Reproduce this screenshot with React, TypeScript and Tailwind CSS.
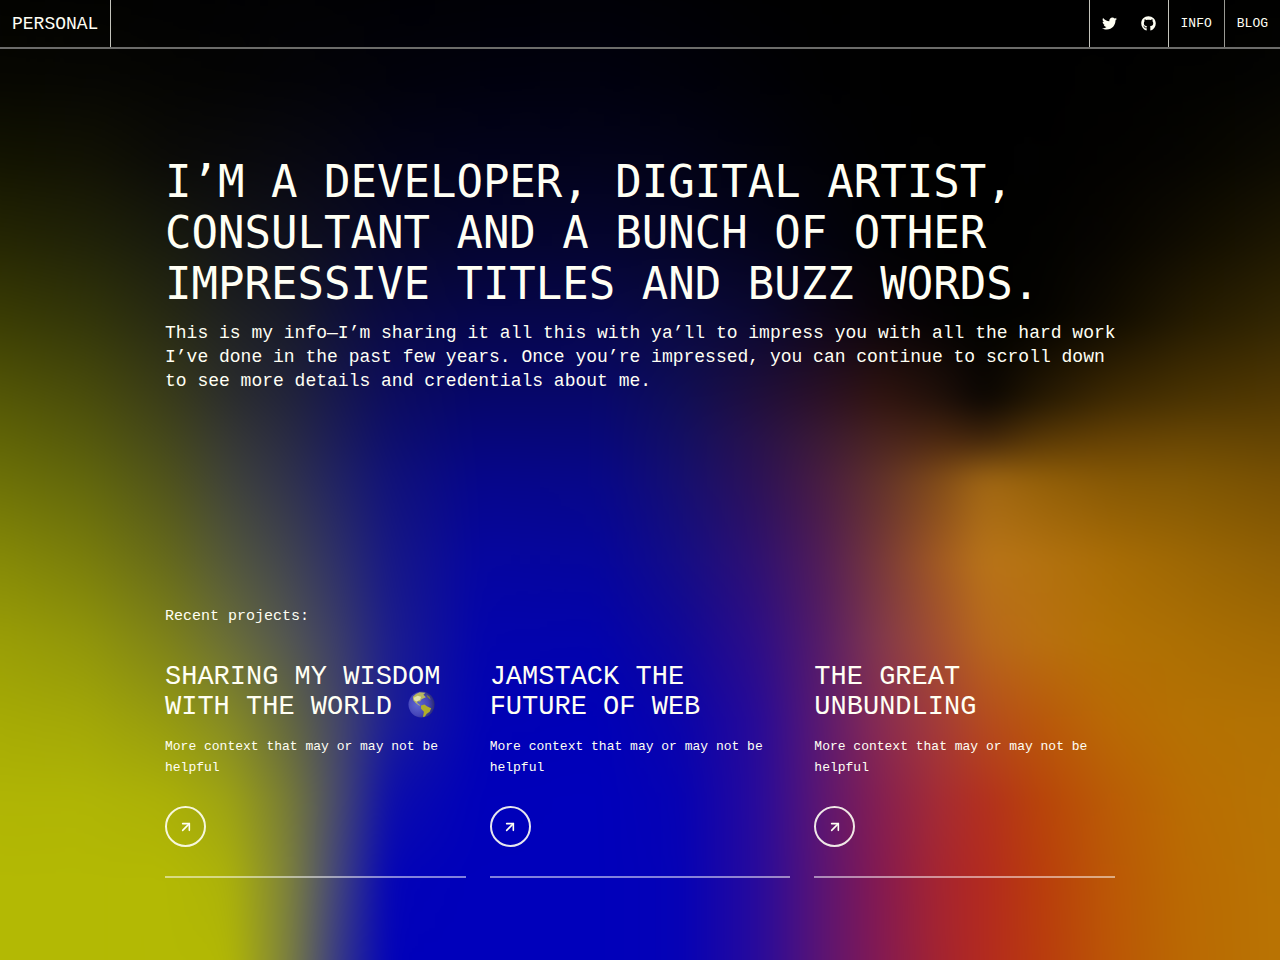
import { FaGithub, FaTwitter } from "react-icons/fa";
import { FiArrowUpRight } from "react-icons/fi";

const ROWS = [0, 80, 160, 240, 320, 400, 440, 480, 560, 640, 720, 800, 880, 960];

const COLUMNS: { x: number; colors: string[] }[] = [
  { x: 0, colors: ["#030301", "#070701", "#131401", "#252603", "#3b3d04", "#555806", "#616506", "#6d7107", "#868a07", "#9a9e06", "#a6ab05", "#b0b505", "#b3b904", "#b3b904"] },
  { x: 90, colors: ["#030301", "#070703", "#121204", "#202208", "#33360a", "#4a4d0c", "#55590d", "#61660d", "#797d0c", "#90950b", "#a2a708", "#afb506", "#b3b904", "#b3b904"] },
  { x: 170, colors: ["#020202", "#050503", "#0b0b08", "#181a0e", "#272914", "#3a3c1a", "#44471c", "#4f521c", "#65691c", "#7d811a", "#959a11", "#abb008", "#b3b904", "#b3b904"] },
  { x: 230, colors: ["#020203", "#040404", "#0a0a0c", "#131417", "#1f2122", "#2c2e2e", "#363835", "#3f423a", "#53573c", "#6a6e38", "#858a26", "#9da314", "#acb20a", "#b2b804"] },
  { x: 290, colors: ["#020204", "#040407", "#090911", "#0f101d", "#181a2a", "#22243c", "#292b44", "#30324c", "#414450", "#535652", "#63673f", "#767a37", "#7c803c", "#7a7e40"] },
  { x: 340, colors: ["#020204", "#030309", "#070714", "#0c0c23", "#101139", "#171850", "#1b1c5a", "#202264", "#2d2f6a", "#3a3c6a", "#43456a", "#454770", "#3e4080", "#34368a"] },
  { x: 390, colors: ["#010105", "#02020b", "#040418", "#08082a", "#0a0a44", "#0d0d60", "#0e0f6d", "#111279", "#171886", "#1c1d8e", "#1b1d98", "#0c0dac", "#0303b8", "#0101bb"] },
  { x: 480, colors: ["#010106", "#01010e", "#03031c", "#050530", "#06064c", "#06066c", "#06067c", "#06068b", "#0606a0", "#0404ad", "#0202b5", "#0000ba", "#0000bb", "#0000bb"] },
  { x: 600, colors: ["#010107", "#01010f", "#03031b", "#05052f", "#07074b", "#08086c", "#08087a", "#080888", "#06069c", "#0303ac", "#0000b7", "#0000bb", "#0000bb", "#0000bb"] },
  { x: 680, colors: ["#010105", "#01010b", "#030317", "#050528", "#0a0a40", "#100e58", "#130f64", "#150f70", "#140d86", "#100899", "#0a04aa", "#0602b3", "#0502b6", "#0502b6"] },
  { x: 760, colors: ["#010102", "#010106", "#02020e", "#04041c", "#0b0830", "#210f3c", "#29124a", "#2d1256", "#301170", "#2e0e86", "#290b96", "#290b9a", "#290b9b", "#290b9b"] },
  { x: 820, colors: ["#010101", "#010102", "#020207", "#03030f", "#0d061a", "#2c1128", "#3b1a36", "#471c42", "#501c58", "#541b68", "#5a1970", "#5b1672", "#5a1474", "#5a1474"] },
  { x: 880, colors: ["#010101", "#010101", "#010102", "#020205", "#0a040a", "#321510", "#4a2420", "#60312b", "#77383a", "#82384c", "#882c52", "#851f51", "#851a50", "#841a52"] },
  { x: 940, colors: ["#000000", "#000000", "#010101", "#010101", "#040203", "#21110a", "#4c2810", "#814c18", "#a25a22", "#a4502f", "#a43c38", "#a52c34", "#a62530", "#a42430"] },
  { x: 985, colors: ["#000000", "#000000", "#000000", "#010101", "#020200", "#0a0603", "#42260b", "#a26814", "#b97519", "#b8681c", "#b54c1e", "#b3301e", "#b32a1f", "#b32a1f"] },
  { x: 1040, colors: ["#000000", "#000000", "#010101", "#020200", "#040300", "#261903", "#5a3906", "#946009", "#b37210", "#b97010", "#b9580c", "#b8440a", "#b93d0c", "#b93b0e"] },
  { x: 1110, colors: ["#000000", "#010100", "#030200", "#070501", "#110c01", "#3f2a02", "#664204", "#865805", "#a96d06", "#b37204", "#b96a05", "#ba5c06", "#bb5806", "#bb5606"] },
  { x: 1190, colors: ["#010100", "#020200", "#060501", "#110d01", "#251b01", "#4b3402", "#694704", "#805704", "#9c6704", "#ab6f04", "#b57203", "#b96e03", "#ba6b03", "#ba6a03"] },
  { x: 1280, colors: ["#010100", "#040401", "#0d0b01", "#1d1701", "#322602", "#523902", "#644503", "#775003", "#906004", "#a36b03", "#b17203", "#b67403", "#b87403", "#b97403"] },
];

function MeshBackground() {
  return (
    <svg
      aria-hidden="true"
      className="absolute inset-0 size-full"
      viewBox="0 0 1280 960"
      preserveAspectRatio="none"
    >
      <defs>
        <filter id="soften" x="-100" y="-100" width="1480" height="1160" filterUnits="userSpaceOnUse" colorInterpolationFilters="sRGB">
          <feGaussianBlur stdDeviation="14 10" />
        </filter>
        {COLUMNS.map((column, i) => {
          const start = i === 0 ? -200 : COLUMNS[i - 1].x;
          return (
            <g key={column.x}>
              <linearGradient id={`tone-${i}`} gradientUnits="userSpaceOnUse" x1="0" y1="0" x2="0" y2="960">
                {column.colors.map((color, row) => (
                  <stop key={row} offset={ROWS[row] / 960} stopColor={color} />
                ))}
              </linearGradient>
              <linearGradient id={`ramp-${i}`} gradientUnits="userSpaceOnUse" x1={start} y1="0" x2={column.x} y2="0">
                <stop offset="0" stopColor="#fff" stopOpacity={i === 0 ? 1 : 0} />
                <stop offset="1" stopColor="#fff" stopOpacity="1" />
              </linearGradient>
              <mask id={`fade-${i}`} maskUnits="userSpaceOnUse" x={start} y="-100" width={1400 - start} height="1160">
                <rect x={start} y="-100" width={1400 - start} height="1160" fill={`url(#ramp-${i})`} />
              </mask>
            </g>
          );
        })}
      </defs>
      <g filter="url(#soften)">
        {COLUMNS.map((column, i) => {
          const start = i === 0 ? -200 : COLUMNS[i - 1].x;
          return (
            <rect
              key={column.x}
              x={start}
              y="-100"
              width={1400 - start}
              height="1160"
              fill={`url(#tone-${i})`}
              mask={`url(#fade-${i})`}
            />
          );
        })}
      </g>
    </svg>
  );
}

const PROJECTS = [
  { title: "Sharing my wisdom with the world", globe: true },
  { title: "Jamstack the future of web", globe: false },
  { title: "The great unbundling", globe: false },
];

function Globe() {
  return (
    <svg role="img" aria-label="Globe" viewBox="0 0 28 28" className="-my-2 inline-block size-[27px] align-[4px]">
      <defs>
        <radialGradient id="sea" cx="0.35" cy="0.5" r="0.65">
          <stop offset="0" stopColor="#5f68d0" />
          <stop offset="0.65" stopColor="#4444b8" />
          <stop offset="1" stopColor="#2c2c70" />
        </radialGradient>
      </defs>
      <circle cx="14" cy="14" r="13.5" fill="url(#sea)" />
      <path d="M5 6 Q8 2.5 12 1.2 L18 1.8 L16 4 L18.500 6.500 L14 8.500 L12.500 11 L10 10.500 L9.500 12.500 L13 15 L11.500 15 L8 12.500 L5.500 9.500Z" fill="#b8b860" />
      <path d="M6 7 L10 5 L13.500 6 L12.500 9 L9 11 L6.500 9.500Z" fill="#e2e2aa" />
      <path d="M13.500 15 L17 14 L20 16 L24 18 L22.500 21.500 L19.500 23.500 L17.500 26.500 L15.500 27 L16.500 21.500 L13.500 18.500Z" fill="#b0ae28" />
      <path d="M19 3.500 L22.500 6 L23.500 9 L20 6.500Z" fill="#77774e" />
    </svg>
  );
}

function Header() {
  return (
    <header className="flex h-[49px] items-stretch border-b-2 border-[#6c6c6a]">
      <a href="#home" className="flex items-center border-r border-[#c4c4bc] px-3 pt-px text-[18px]">
        PERSONAL
      </a>
      <nav className="ml-auto flex items-stretch text-[13px]">
        <div className="flex items-center gap-6 border-l border-[#c4c4bc] px-3">
          <a href="#twitter" aria-label="Twitter">
            <FaTwitter className="size-[15px]" />
          </a>
          <a href="#github" aria-label="GitHub">
            <FaGithub className="size-[15px]" />
          </a>
        </div>
        <a href="#info" className="flex items-center border-l border-[#c4c4bc] px-3 pt-px">
          INFO
        </a>
        <a href="#blog" className="flex items-center border-l border-[#9a9a94] px-3 pt-px">
          BLOG
        </a>
      </nav>
    </header>
  );
}

export default function App() {
  return (
    <div className="relative isolate min-h-screen overflow-hidden bg-black font-['Liberation_Mono',monospace] text-[#fffff4]">
      <MeshBackground />
      <div className="relative">
        <Header />
        <main className="mx-auto w-full max-w-[998px] px-6 pt-[107px] pb-16">
          <h1 className="font-['DejaVu_Sans_Mono',monospace] text-[44px] leading-[51px] uppercase">
            I’m a developer, digital artist, consultant and a bunch of other impressive titles and buzz words.
          </h1>
          <p className="-mr-2 mt-3 text-[18px] leading-6">
            This is my info—I’m sharing it all this with ya’ll to impress you with all the hard work I’ve done in the
            past few years. Once you’re impressed, you can continue to scroll down to see more details and credentials
            about me.
          </p>
          <section className="mt-[212px]">
            <h2 className="text-[15px] leading-6">Recent projects:</h2>
            <div className="mt-[33px] grid grid-cols-3 gap-6">
              {PROJECTS.map((project) => (
                <article key={project.title} className="border-b-2 border-white/50 pb-[29px]">
                  <h3 className="text-[27px] leading-[30px] uppercase">
                    {project.title} {project.globe && <Globe />}
                  </h3>
                  <p className="mt-[14px] text-[13px] leading-[21px]">More context that may or may not be helpful</p>
                  <a
                    href="#project"
                    aria-label={`Open ${project.title}`}
                    className="mt-7 flex size-[41px] items-center justify-center rounded-full border-2 border-[#fffff4]/90"
                  >
                    <FiArrowUpRight className="size-4" strokeWidth={2.4} />
                  </a>
                </article>
              ))}
            </div>
          </section>
        </main>
      </div>
    </div>
  );
}
